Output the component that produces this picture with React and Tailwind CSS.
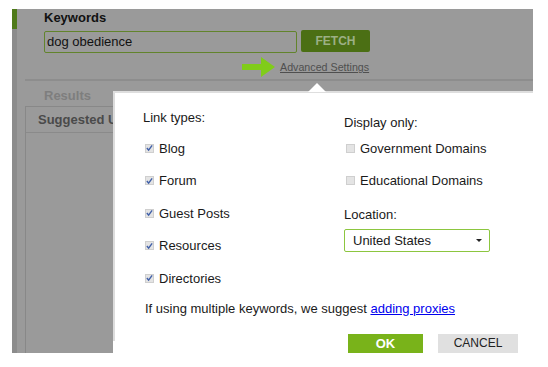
import { useState } from 'react';

const font = { fontFamily: '"Liberation Sans", Arial, sans-serif' };

const CheckBox = ({ checked }) => (
  <span className="w-[9px] h-[9px] bg-[#e4e4e4] border border-[#cfcfcf] flex items-center justify-center">
    {checked && (
      <svg width="8" height="8" viewBox="0 0 8 8">
        <path d="M1 4 L3 6.5 L7 1" fill="none" stroke="#3f5fa8" strokeWidth="1.6" />
      </svg>
    )}
  </span>
);

const Row = ({ label, checked }) => (
  <div className="h-[32.5px] flex items-center">
    <div className="w-[16px] pl-[2px]">
      <CheckBox checked={checked} />
    </div>
    <span className="text-[13px] text-[#1a1a1a]">{label}</span>
  </div>
);

const App = () => {
  const [linkTypes] = useState(['Blog', 'Forum', 'Guest Posts', 'Resources', 'Directories']);

  return (
    <div className="relative w-[548px] h-[367px] bg-white overflow-hidden" style={font}>
      {/* dimmed page behind the popup */}
      <div className="ml-[12px] mt-[9px] w-[521px] h-[344px] bg-[#9a9a9a] flex">
        <div className="w-[5px] flex flex-col">
          <div className="h-[20px] bg-[#4f7a1a]" />
          <div className="flex-1 bg-[#8c8c8c]" />
        </div>
        <div className="flex-1 pl-[8px] flex flex-col">
          <div className="pl-[19px]">
            <p className="h-4 mt-[1px] leading-4 text-[13px] font-bold text-[#111]">Keywords</p>
            <div className="flex mt-[5px]">
              <div className="w-[253px] h-[22px] border border-[#62842c] rounded-[2px] flex items-center pl-[2px] text-[13px] text-[#111]">
                dog obedience
              </div>
              <button className="ml-[4px] -mt-px w-[69px] h-[22px] bg-[#4b6f14] rounded-[2px] text-[12px] font-bold text-[#9caf85]">
                FETCH
              </button>
            </div>
            <div className="mt-[4px] h-[20px] flex items-center pl-[198px]">
              <svg width="33" height="20" viewBox="0 0 33 20">
                <path d="M0 7 H19 V0 L33 10 L19 20 V13 H0 Z" fill="#80cc1a" />
              </svg>
              <span className="ml-[5px] mt-[1px] text-[10.7px] text-[#4f4f4f] underline">Advanced Settings</span>
            </div>
          </div>
          <div className="mt-[2px] h-[2px] bg-[#8d8d8d]" />
          <p className="mt-[7px] h-4 leading-4 pl-[19px] text-[13px] font-bold text-[#7e7e7e]">Results</p>
          <div className="mt-[2px] flex-1 border-t border-l border-[#888]">
            <div className="h-[26px] border-b border-[#8a8a8a] flex items-center pl-[12px] text-[13px] font-bold text-[#4a4a4a]">
              Suggested URLs
            </div>
          </div>
        </div>
      </div>

      {/* advanced settings popup */}
      <div className="absolute left-[113px] top-[91px] w-[420px] h-[276px] bg-white border-t-2 border-[#dedede] flex">
        <div className="absolute left-[195px] -top-[10px] w-0 h-0 border-l-[9px] border-r-[9px] border-b-[9px] border-l-transparent border-r-transparent border-b-white" />
        <div className="w-[2px] h-[248px] bg-[#dcdcdc]" />
        <div className="flex-1 flex flex-col">
          <div className="flex pt-[17px]">
            <div className="w-[200px] pl-[28px]">
              <p className="h-4 leading-4 text-[13px] text-[#1a1a1a]">Link types:</p>
              <div className="mt-[6px]">
                {linkTypes.map((t) => (
                  <Row key={t} label={t} checked />
                ))}
              </div>
            </div>
            <div className="flex-1 pl-[29px]">
              <p className="mt-[5px] h-4 leading-4 text-[13px] text-[#1a1a1a]">Display only:</p>
              <div className="mt-[1px]">
                <Row label="Government Domains" />
                <Row label="Educational Domains" />
              </div>
              <p className="mt-[10px] h-4 leading-4 text-[13px] text-[#1a1a1a]">Location:</p>
              <div className="mt-[6px] w-[146px] h-[23px] border border-[#8cc63f] rounded-[2px] flex items-center justify-between pl-[8px] pr-[7px] text-[13px] text-[#1a1a1a]">
                <span>United States</span>
                <span className="w-0 h-0 border-l-[3px] border-r-[3px] border-t-[3px] border-l-transparent border-r-transparent border-t-[#222]" />
              </div>
            </div>
          </div>
          <p className="mt-[6px] h-4 leading-4 pl-[30px] text-[13px] text-[#1a1a1a]">
            If using multiple keywords, we suggest{' '}
            <a href="#" className="text-[#0000ee] underline">adding proxies</a>
          </p>
          <div className="mt-[17px] flex justify-end gap-[15px] pr-[15px]">
            <button className="w-[75px] h-[19px] bg-[#79b31a] text-white text-[13px] font-bold leading-[19px]">OK</button>
            <button className="w-[80px] h-[19px] bg-[#e0e0e0] text-[#222] text-[12px] leading-[19px]">CANCEL</button>
          </div>
        </div>
      </div>
    </div>
  );
};

export default App;
